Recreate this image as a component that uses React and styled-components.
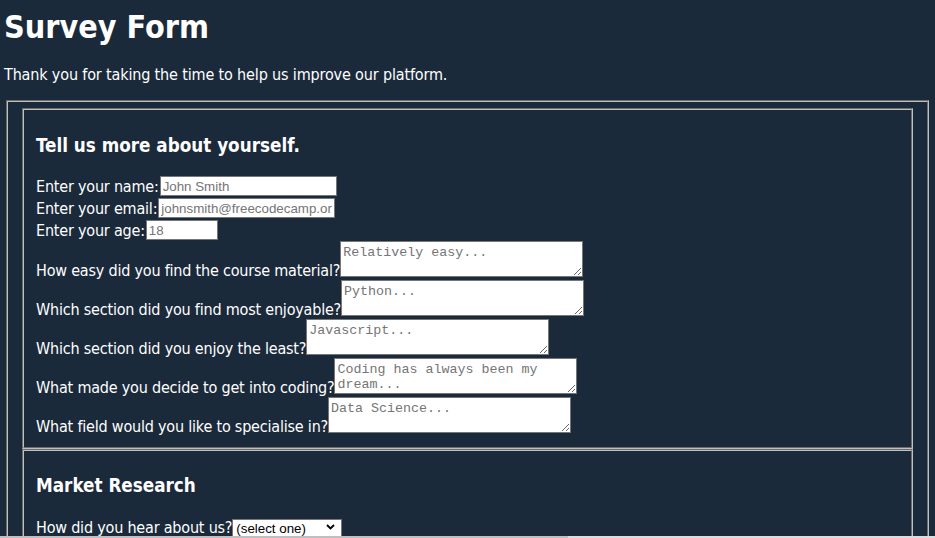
import React from "react";
import styled, { createGlobalStyle } from "styled-components";

const Global = createGlobalStyle`
  html, body { margin: 0; padding: 0; background: #1b2a3b; }
  body {
    color: #ffffff;
    font-family: "DejaVu Sans Condensed", "DejaVu Sans", sans-serif;
    font-size: 16px;
  }
`;

const Page = styled.main`
  padding: 0 4px;
`;

const Title = styled.h1`
  margin: 3px 0 0;
  font-size: 32px;
  line-height: 44px;
  font-weight: bold;
  padding-top: 2px;
  height: 42px;
`;

const Intro = styled.p`
  margin: 18px 0 16px;
  font-size: 16px;
  letter-spacing: -0.15px;
`;

const Form = styled.form`
  display: block;
`;

const Frame = styled.fieldset`
  margin: 0 2px;
  padding: 6px 12px 10px;
  border: 2px groove #c0c0c0;
  min-width: 0;
`;

const Section = styled.fieldset`
  margin: 0 2px;
  padding: 6px 12px ${(p) => p.$bottom || 10.5}px;
  border: 2px groove #c0c0c0;
  min-width: 0;
`;

const SectionTitle = styled.h3`
  margin: 18.6px 0 19.7px;
  font-size: 18.72px;
  font-weight: bold;
  line-height: normal;
`;

const Row = styled.div`
  display: flex;
  align-items: center;
  height: 22px;
  white-space: nowrap;
`;

const TallRow = styled.div`
  display: flex;
  align-items: flex-end;
  height: 39px;
  white-space: nowrap;
`;

const Label = styled.label`
  line-height: normal;
  letter-spacing: -0.2px;
`;

const TextInput = styled.input`
  box-sizing: border-box;
  width: ${(p) => p.$w}px;
  height: 20px;
  margin: 0 0 0 1px;
  padding: 1px 2px;
  border: 1px solid #767676;
  background: #fff;
  font-family: "Liberation Sans", Arial, sans-serif;
  font-size: 13.33px;
  color: #000;
  &::placeholder { color: #757575; }
  &::-webkit-outer-spin-button,
  &::-webkit-inner-spin-button { -webkit-appearance: none; margin: 0; }
  -moz-appearance: textfield;
`;

const Area = styled.textarea`
  box-sizing: border-box;
  width: 243px;
  height: 36px;
  margin: 0 0 3px;
  padding: 3px 2px 2px;
  border: 1px solid #767676;
  background: #fff;
  font-family: "Liberation Mono", "DejaVu Sans Mono", monospace;
  font-size: 13.33px;
  line-height: 15px;
  overflow: hidden;
  &::placeholder { color: #757575; }
`;

const SelectWrap = styled.span`
  position: relative;
  display: inline-block;
  height: 19px;
  margin-top: 1px;
`;

const Select = styled.select`
  box-sizing: border-box;
  width: 110px;
  height: 19px;
  padding: 0 20px 0 3px;
  border: 1px solid #767676;
  background: #fff;
  appearance: none;
  -webkit-appearance: none;
  font-family: "Liberation Sans", Arial, sans-serif;
  font-size: 13.33px;
  color: #000;
  border-radius: 0;
`;

const Chevron = styled.svg`
  position: absolute;
  right: 7px;
  top: 6px;
  pointer-events: none;
`;

const BottomStrip = styled.div`
  position: fixed;
  left: 0;
  right: 0;
  bottom: 0;
  height: 2px;
  display: grid;
  grid-template-columns: 568px 1fr;
`;

const StripPart = styled.div`
  background: ${(p) => p.$c};
`;

const questions = [
  ["How easy did you find the course material?", "Relatively easy..."],
  ["Which section did you find most enjoyable?", "Python..."],
  ["Which section did you enjoy the least?", "Javascript..."],
  ["What made you decide to get into coding?", "Coding has always been my dream..."],
  ["What field would you like to specialise in?", "Data Science..."],
];

export default function App() {
  return (
    <>
      <Global />
      <Page>
        <Title id="title">Survey Form</Title>
        <Intro id="description">
          Thank you for taking the time to help us improve our platform.
        </Intro>
        <Form id="survey-form">
          <Frame>
            <Section>
              <SectionTitle>Tell us more about yourself.</SectionTitle>
              <Row>
                <Label htmlFor="name">Enter your name:</Label>
                <TextInput id="name" type="text" placeholder="John Smith" $w={177} />
              </Row>
              <Row>
                <Label htmlFor="email">Enter your email:</Label>
                <TextInput
                  id="email"
                  type="email"
                  placeholder="johnsmith@freecodecamp.org"
                  $w={177}
                />
              </Row>
              <Row>
                <Label htmlFor="number">Enter your age:</Label>
                <TextInput id="number" type="number" placeholder="18" $w={72} />
              </Row>
              {questions.map(([q, ph]) => (
                <TallRow key={q}>
                  <Label>{q}</Label>
                  <Area placeholder={ph} />
                </TallRow>
              ))}
            </Section>
            <Section $bottom={10}>
              <SectionTitle>Market Research</SectionTitle>
              <Row>
                <Label htmlFor="dropdown">How did you hear about us?</Label>
                <SelectWrap>
                  <Select id="dropdown" defaultValue="">
                    <option value="">(select one)</option>
                    <option value="friend">A friend</option>
                    <option value="social">Social media</option>
                    <option value="search">Search engine</option>
                  </Select>
                  <Chevron width="9" height="6" viewBox="0 0 9 6">
                    <path d="M1 1 L4.5 4.5 L8 1" fill="none" stroke="#000" strokeWidth="1.8" />
                  </Chevron>
                </SelectWrap>
              </Row>
              <Row />
              <Row />
            </Section>
          </Frame>
        </Form>
      </Page>
      <BottomStrip>
        <StripPart $c="#bfbfbf" />
        <StripPart $c="#dcdcdc" />
      </BottomStrip>
    </>
  );
}
